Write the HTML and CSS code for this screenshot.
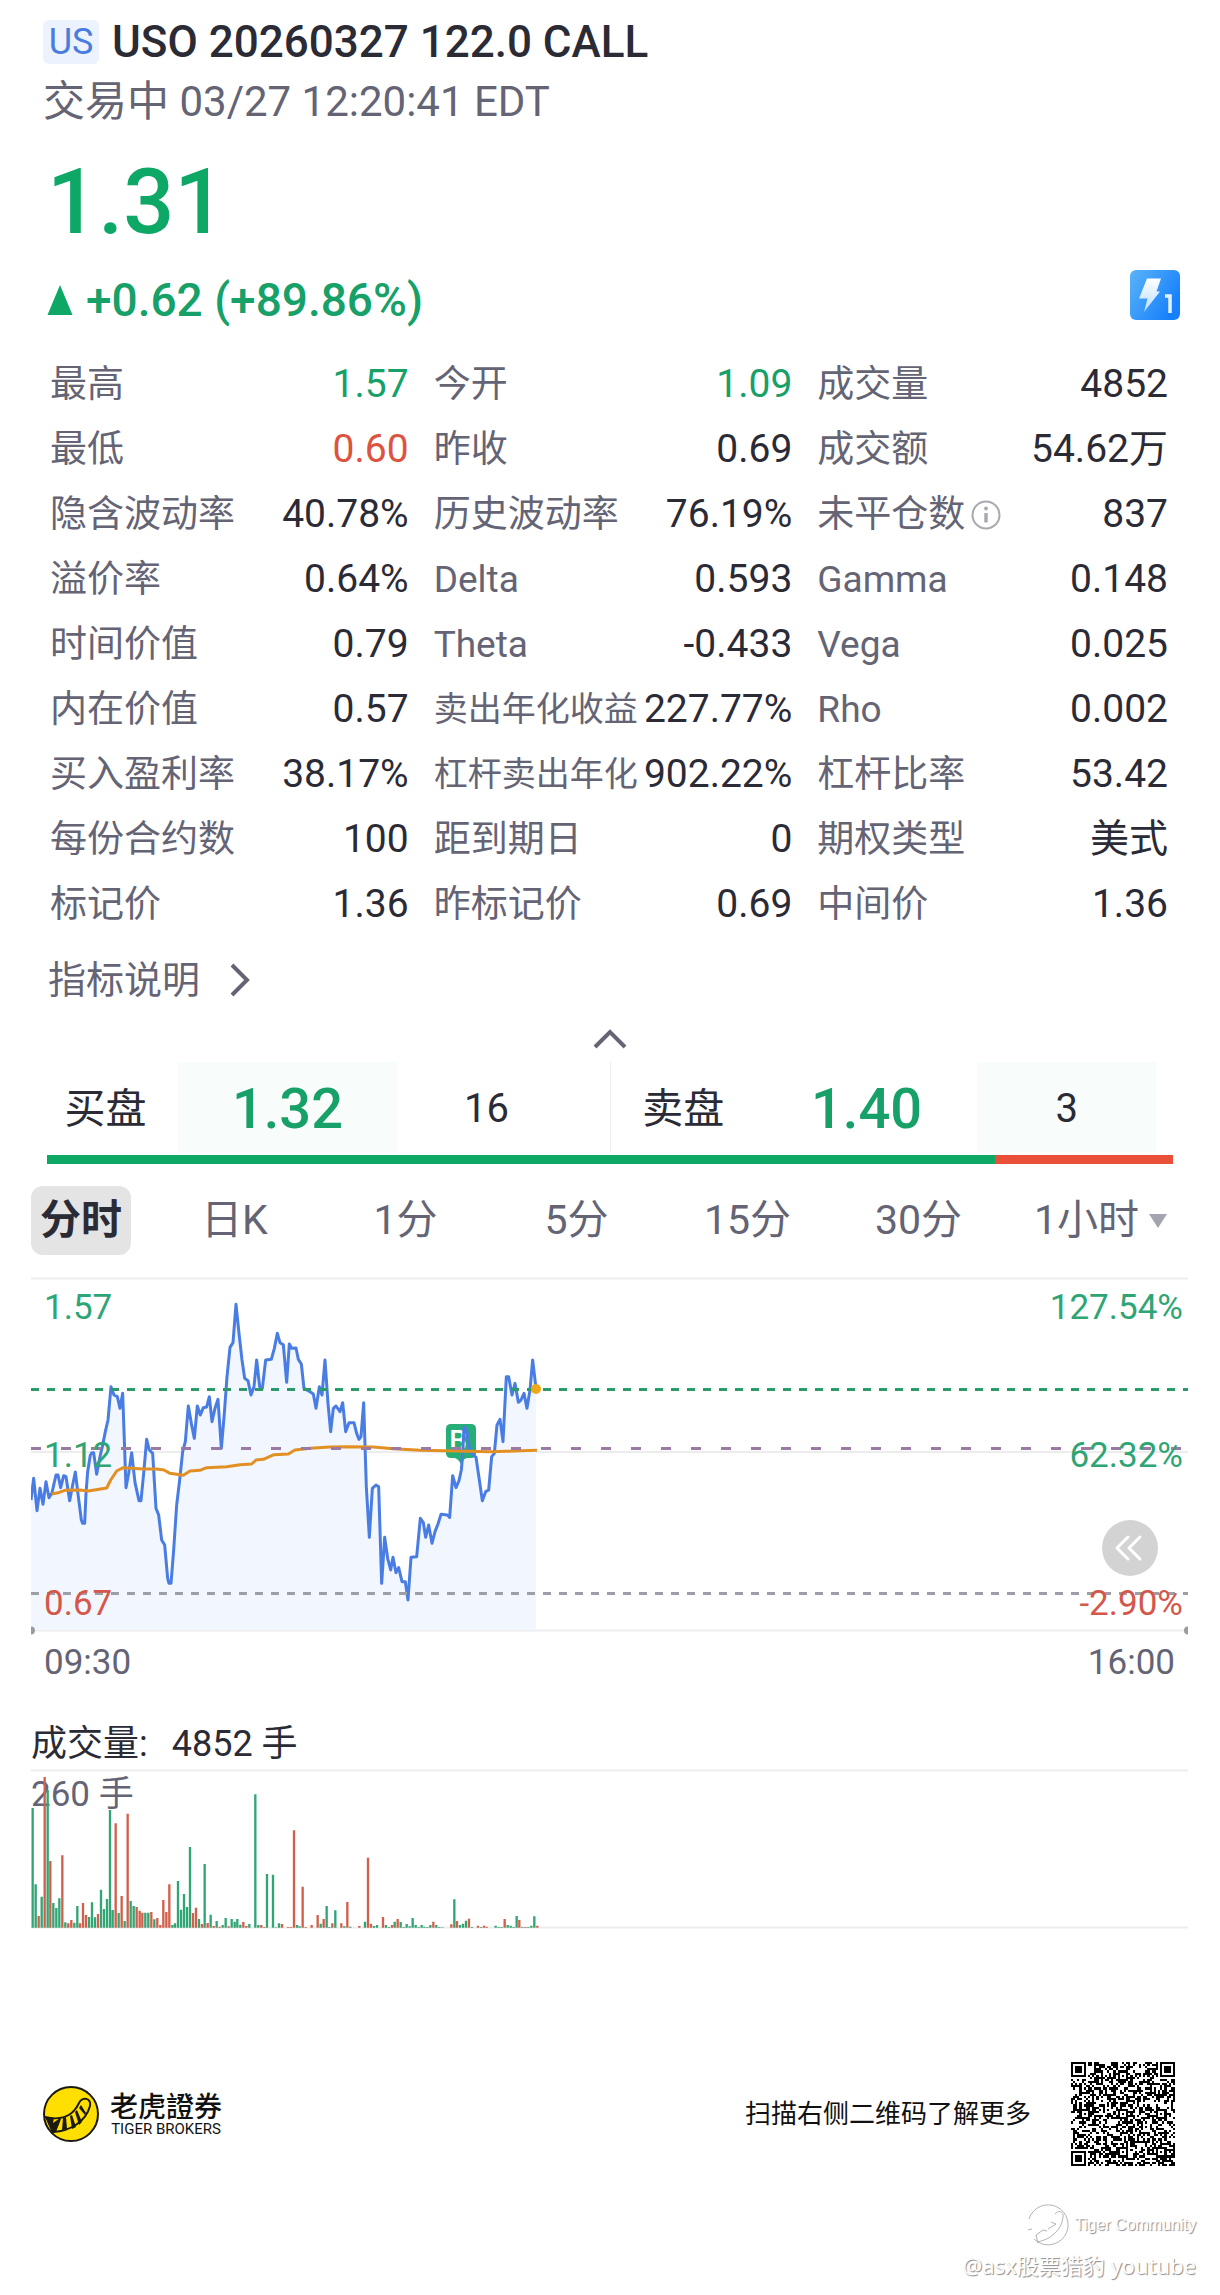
FILE: index.html
```html
<!DOCTYPE html>
<html lang="zh-CN">
<head>
<meta charset="utf-8">
<meta name="viewport" content="width=device-width, initial-scale=1">
<title>USO 20260327 122.0 CALL</title>
<link rel="stylesheet" href="styles.css">
</head>
<body>
<main class="page">
  <header class="quote">
    <h1 class="title"><span class="market">US</span>USO 20260327 122.0 CALL</h1>
    <p class="session">交易中 03/27 12:20:41 EDT</p>
    <p class="price">1.31</p>
    <div class="change-row">
      <p class="change">
        <svg class="change-arrow" viewBox="0 0 26 32" aria-hidden="true"><path d="M13 1 25.500 31H.5z"/></svg>+0.62 (+89.86%)
      </p>
      <svg class="flash" viewBox="0 0 50 50" role="img" aria-label="Level 1">
        <defs>
          <linearGradient id="flash-bg" x1="0" y1="0" x2="1" y2=".6"><stop offset="0" stop-color="#5bb4f8"/><stop offset="1" stop-color="#1680fb"/></linearGradient>
          <linearGradient id="flash-bolt" x1="0" y1="0" x2="0" y2="1"><stop offset="0" stop-color="#fff"/><stop offset="1" stop-color="#b9dcff"/></linearGradient>
        </defs>
        <rect width="50" height="50" rx="6" fill="url(#flash-bg)"/>
        <path d="M17 8.500h14l-4.500 13H30L14 42l3.500-13.500H9z" fill="url(#flash-bolt)"/>
        <path d="M35 26h5v17" fill="none" stroke="#e4f1ff" stroke-width="3.500"/>
      </svg>
    </div>
  </header>

  <dl class="stats">
    <div class="stat"><dt>最高</dt><dd class="up">1.57</dd></div>
    <div class="stat"><dt>今开</dt><dd class="up">1.09</dd></div>
    <div class="stat"><dt>成交量</dt><dd>4852</dd></div>
    <div class="stat"><dt>最低</dt><dd class="down">0.60</dd></div>
    <div class="stat"><dt>昨收</dt><dd>0.69</dd></div>
    <div class="stat"><dt>成交额</dt><dd>54.62万</dd></div>
    <div class="stat"><dt>隐含波动率</dt><dd>40.78%</dd></div>
    <div class="stat"><dt>历史波动率</dt><dd>76.19%</dd></div>
    <div class="stat"><dt>未平仓数<svg class="info" viewBox="0 0 30 30" aria-hidden="true"><circle cx="15" cy="15" r="13.500" fill="none" stroke="#a9a9b2" stroke-width="2"/><circle cx="15" cy="8.500" r="2" fill="#a9a9b2"/><path d="M15 13v9.500" stroke="#a9a9b2" stroke-width="3.500"/></svg></dt><dd>837</dd></div>
    <div class="stat"><dt>溢价率</dt><dd>0.64%</dd></div>
    <div class="stat"><dt>Delta</dt><dd>0.593</dd></div>
    <div class="stat"><dt>Gamma</dt><dd>0.148</dd></div>
    <div class="stat"><dt>时间价值</dt><dd>0.79</dd></div>
    <div class="stat"><dt>Theta</dt><dd>-0.433</dd></div>
    <div class="stat"><dt>Vega</dt><dd>0.025</dd></div>
    <div class="stat"><dt>内在价值</dt><dd>0.57</dd></div>
    <div class="stat"><dt class="tight">卖出年化收益</dt><dd>227.77%</dd></div>
    <div class="stat"><dt>Rho</dt><dd>0.002</dd></div>
    <div class="stat"><dt>买入盈利率</dt><dd>38.17%</dd></div>
    <div class="stat"><dt class="tight">杠杆卖出年化</dt><dd>902.22%</dd></div>
    <div class="stat"><dt>杠杆比率</dt><dd>53.42</dd></div>
    <div class="stat"><dt>每份合约数</dt><dd>100</dd></div>
    <div class="stat"><dt>距到期日</dt><dd>0</dd></div>
    <div class="stat"><dt>期权类型</dt><dd>美式</dd></div>
    <div class="stat"><dt>标记价</dt><dd>1.36</dd></div>
    <div class="stat"><dt>昨标记价</dt><dd>0.69</dd></div>
    <div class="stat"><dt>中间价</dt><dd>1.36</dd></div>
  </dl>

  <a class="explain" href="#indicators">指标说明
    <svg class="explain-arrow" viewBox="0 0 20 34" aria-hidden="true"><path d="M2 2l15 15L2 32"/></svg>
  </a>
  <button class="collapse" type="button" aria-label="收起">
    <svg viewBox="0 0 34 20" aria-hidden="true"><path d="M2 18 17 3l15 15"/></svg>
  </button>

  <section class="book" aria-label="买卖盘">
    <div class="side">
      <span class="side-name">买盘</span><span class="side-price tint">1.32</span><span class="side-size">16</span>
    </div>
    <div class="side ask">
      <span class="side-name">卖盘</span><span class="side-price">1.40</span><span class="side-size tint">3</span>
    </div>
  </section>
  <div class="ratio"><span style="width:84.2%"></span></div>

  <nav class="tabs" aria-label="周期">
    <button class="tab active" type="button">分时</button>
    <button class="tab" type="button">日K</button>
    <button class="tab" type="button">1分</button>
    <button class="tab" type="button">5分</button>
    <button class="tab" type="button">15分</button>
    <button class="tab" type="button">30分</button>
    <button class="tab more" type="button">1小时<svg class="caret" viewBox="0 0 18 14" aria-hidden="true"><path d="M0 0h18L9 14z"/></svg></button>
  </nav>

  <section class="charts">
    <div class="chart-box">
      <svg class="chart" viewBox="0 0 1157 360" role="img" aria-label="分时走势">
        <path class="rule" d="M0 1.500h1157M0 175h1157M0 353.500h1157"/>
        <g transform="scale(.33333) translate(-33 -21)">
          <path id="area" class="area"/>
          <rect x="1278" y="462" width="90" height="102" rx="14" fill="#26ae76"/>
          <path d="M1300 563q14 2 22 18q8-16 24-18z" fill="#26ae76"/>
        </g>
        <text class="marker" x="427" y="173" text-anchor="middle">B</text>
        <g transform="scale(.33333) translate(-33 -21)">
          <polyline id="price-line" class="price-line" points="33,690 41,625 51,722 60,655 69,703 78,635 87,683 96,668 108,615 114,615 122,653 131,617 138,620 149,692 158,645 166,606 175,680 184,750 188,760 194,760 198,670 203,605 211,555 216,548 221,548 230,613 240,560 247,530 256,485 264,450 273,350 282,375 292,380 300,415 308,370 318,653 326,610 335,548 345,638 357,692 363,692 371,610 380,508 388,540 398,550 408,715 416,735 425,810 434,825 443,925 447,940 453,940 461,840 470,705 479,630 488,545 496,515 505,408 514,460 523,505 532,408 541,435 550,413 560,411 568,380 576,455 585,415 594,388 604,535 613,430 621,320 630,232 639,218 648,103 657,190 666,270 674,325 684,332 693,375 702,350 710,270 719,350 727,355 737,270 754,268 763,235 772,190 780,218 790,224 800,337 808,222 815,235 828,234 835,268 844,282 852,355 870,365 880,372 888,415 898,350 906,375 915,270 924,400 932,485 940,415 948,408 960,425 968,398 977,485 987,458 1002,458 1010,490 1017,508 1023,500 1031,398 1039,650 1048,802 1057,655 1068,645 1076,650 1085,940 1094,802 1103,865 1112,900 1119,862 1128,908 1136,893 1146,935 1156,935 1164,990 1173,862 1190,860 1201,745 1210,758 1217,802 1226,765 1236,820 1245,785 1254,762 1263,733 1282,735 1289,742 1298,617 1308,653 1317,632 1324,600 1328,555 1332,470 1340,480 1350,545 1368,562 1378,630 1387,692 1397,665 1406,660 1415,560 1423,550 1431,465 1440,448 1449,515 1459,320 1466,320 1476,375 1485,340 1495,397 1503,390 1512,370 1521,415 1530,360 1538,270 1548,355"/>
          <polyline class="average-line" points="95,672 115,668 135,661 180,660 205,663 260,654 272,630 290,603 310,593 370,597 410,597 432,600 450,610 490,616 510,603 540,601 560,593 620,590 660,584 695,582 708,570 730,568 762,554 805,552 825,540 870,535 930,531 990,530 1060,531 1120,536 1200,541 1310,543 1410,545 1460,544 1551,541"/>
        </g>
        <path class="dash current" d="M0 112.500h1157"/>
        <path class="dash middle" d="M0 171.500h1157"/>
        <path class="dash previous" d="M0 316.500h1157"/>
        <circle cx="505" cy="112" r="5" fill="#f0a818"/>
        <path d="M0 349.500a4 4 0 0 1 0 8zM1157 349.500a4 4 0 0 0 0 8z" fill="#9b9ba3"/>
        <g class="axis">
          <text class="up" x="13" y="42">1.57</text>
          <text class="up" x="13" y="190">1.12</text>
          <text class="down" x="13" y="338">0.67</text>
          <text class="up" x="1152" y="42" text-anchor="end">127.54%</text>
          <text class="up" x="1152" y="190" text-anchor="end">62.32%</text>
          <text class="down" x="1152" y="338" text-anchor="end">-2.90%</text>
        </g>
      </svg>
      <button class="rewind" type="button" aria-label="展开">
        <svg viewBox="0 0 56 56" aria-hidden="true"><path d="M26 17 15 28l11 11M38 17 27 28l11 11"/></svg>
      </button>
    </div>
    <div class="times"><span>09:30</span><span>16:00</span></div>
    <p class="volume-title"><span>成交量:</span><span>4852 手</span></p>
    <svg class="chart" viewBox="0 0 1157 164" role="img" aria-label="成交量">
      <path class="rule" d="M0 2.500h1157M0 159.500h1157"/>
      <text class="volume-max" x="0" y="38">260 手</text>
      <g transform="scale(.33333) translate(-33 -144)">
        <path id="volume-up" class="bars-up"/>
        <path id="volume-down" class="bars-down"/>
      </g>
    </svg>
  </section>

  <footer class="brand">
    <svg class="brand-logo" viewBox="0 0 56 56" aria-hidden="true">
      <circle cx="28" cy="28" r="27" fill="#ffdf00" stroke="#1c1a10" stroke-width="2"/>
      <path d="M2 31c16 4 28-1 34-14 3-7 13-5 11 3-4 15-19 25-37 26" fill="none" stroke="#1c1a10" stroke-width="2"/>
      <path d="M2 31l9 1-1 5 7-5 1 1-5 13-4 1zM20 32l3-1 1 12-5 1zM27 30l2-1 4 12-4 2zM32 26l2-2 5 12-3 3zM36 22l2-3 5 8-1 2z" fill="#1c1a10"/>
    </svg>
    <div class="brand-name"><strong>老虎證券</strong><span>TIGER BROKERS</span></div>
    <p class="scan">扫描右侧二维码了解更多</p>
    <svg class="qr" viewBox="0 0 49 49" shape-rendering="crispEdges" role="img" aria-label="二维码"><path id="qr-modules"/></svg>
  </footer>

  <aside class="watermark">
    <p class="community">
      <svg viewBox="0 0 44 44" aria-hidden="true">
        <path d="M3 16A20 20 0 1 1 8 36M2 27l4-1M12 40l-2-8 7-5 4 1M22 26l8-5-5-2M29 11c3-4 9-3 8 3-1 13-13 23-26 25"/>
      </svg>Tiger Community
    </p>
    <p class="author">@asx股票猎豹 youtube</p>
  </aside>
</main>
<script src="script.js"></script>
</body>
</html>
```
FILE: styles.css
```css
* { box-sizing: border-box; }

body {
  margin: 0;
  background: #fff;
  color: #2b2b36;
  font-family: Roboto, "Noto Sans CJK SC", sans-serif;
}

h1, p, dl, dd { margin: 0; }

button {
  padding: 0;
  border: 0;
  background: none;
  color: inherit;
  font: inherit;
}

.up { color: #17a068; fill: #2ea574; }
.down { color: #dc5340; fill: #d4574b; }

.page {
  display: flex;
  flex-direction: column;
  padding: 12px 0;
}

/* Quote header */
.quote { padding: 0 40px 0 43px; }

.title {
  display: flex;
  align-items: center;
  gap: 13px;
  font-size: 44px;
  font-weight: 500;
  line-height: 60px;
}

.market {
  width: 56px;
  border-radius: 6px;
  background: #edf3fe;
  color: #4a7ce0;
  font-size: 36px;
  font-weight: 400;
  line-height: 44px;
  text-align: center;
}

.session {
  color: #646475;
  font-size: 42px;
  line-height: 60px;
}

.price {
  margin: 16px 0 12px 4px;
  color: #0da766;
  font-size: 90px;
  font-weight: 500;
  line-height: 110px;
}

.change-row {
  display: flex;
  justify-content: space-between;
  align-items: flex-start;
}

.change {
  display: flex;
  align-items: center;
  gap: 13px;
  margin-left: 4px;
  color: #17a068;
  font-size: 46px;
  font-weight: 500;
  line-height: 60px;
}

.change-arrow { width: 26px; height: 32px; fill: #0da766; }
.flash { width: 50px; height: 50px; }

/* Statistics */
.stats {
  display: grid;
  grid-template-columns: 359fr 359fr 351fr;
  grid-auto-rows: 65px;
  column-gap: 25px;
  margin-top: 22px;
  padding: 0 52px 0 50px;
  line-height: 65px;
}

.stat {
  display: flex;
  justify-content: space-between;
  min-width: 0;
  white-space: nowrap;
}

.stat dt {
  display: flex;
  align-items: center;
  gap: 6px;
  color: #646475;
  font-size: 37px;
}

.stat dt.tight { font-size: 34px; }
.stat dd { font-size: 39px; }
.info { width: 30px; height: 30px; }

.explain {
  display: flex;
  align-items: center;
  align-self: flex-start;
  gap: 30px;
  margin: 13px 0 0 48px;
  color: #646475;
  font-size: 38px;
  line-height: 60px;
  text-decoration: none;
}

.explain-arrow { width: 20px; height: 34px; }

.explain-arrow path,
.collapse path {
  fill: none;
  stroke: #646475;
  stroke-width: 4;
}

.collapse {
  display: flex;
  align-items: center;
  align-self: center;
  height: 40px;
  margin-top: 9px;
}

.collapse svg { width: 34px; height: 20px; }

/* Bid and ask */
.book {
  display: grid;
  grid-template-columns: 1fr 1fr;
  margin: 3px 47px 0;
}

.side {
  display: grid;
  grid-template-columns: 131fr 219fr 213fr;
  height: 90px;
  line-height: 94px;
  text-align: center;
}

.side.ask {
  grid-template-columns: 145fr 222fr 179fr;
  padding-right: 17px;
  border-left: 1px solid #f0f0f2;
}

.side > span { height: 90px; }
.side-name { font-size: 41px; }
.side:not(.ask) .side-name { padding-right: 14px; }
.side-price { color: #17a068; font-size: 56px; font-weight: 500; }
.side-size { font-size: 40px; }
.side:not(.ask) .side-size { padding-right: 34px; }
.tint { background: #f8fdfc; }

.ratio {
  height: 9px;
  margin: 3px 47px 0;
  background: #ea5038;
}

.ratio span { display: block; height: 100%; background: #0da766; }

/* Period tabs */
.tabs {
  display: grid;
  grid-template-columns: 118fr repeat(6, 171fr);
  margin: 22px 45px 22px 31px;
}

.tab {
  display: flex;
  align-items: center;
  justify-content: center;
  gap: 10px;
  height: 69px;
  color: #646475;
  font-size: 41px;
  line-height: 69px;
}

.tab.active {
  justify-self: start;
  padding: 0 9px;
  border-radius: 12px;
  background: #e4e4e4;
  color: #2b2b36;
  font-weight: 700;
}

.tab.more { justify-content: flex-end; padding-right: 8px; }

.caret { width: 18px; height: 14px; fill: #a4a4b0; }

/* Charts */
.charts { padding: 0 32px 0 31px; }
.chart { display: block; width: 100%; height: auto; }
.chart-box { position: relative; }
.rule { stroke: #ededf0; stroke-width: 2; }
.area { fill: #f2f6fe; }

.price-line,
.average-line {
  fill: none;
  stroke: #4a7de4;
  stroke-width: 9;
  stroke-linejoin: round;
}

.average-line { stroke: #e28f24; }
.dash { stroke-width: 3; }
.current { stroke: #2a9a6b; stroke-dasharray: 8; }
.middle { stroke: #9a7aa3; stroke-dasharray: 10 20; }
.previous { stroke: #9e9ea6; stroke-dasharray: 8; }
.marker { fill: #fff; font-size: 28px; font-weight: 500; }
.axis { font-size: 35px; }

.rewind {
  position: absolute;
  top: 243px;
  right: 30px;
  width: 56px;
  height: 56px;
  border-radius: 50%;
  background: #d3d3d4;
}

.rewind svg { display: block; }

.rewind path {
  fill: none;
  stroke: #fff;
  stroke-width: 3;
  stroke-linecap: round;
  stroke-linejoin: round;
}

.times {
  display: flex;
  justify-content: space-between;
  padding: 2px 13px 0;
  color: #646475;
  font-size: 35px;
  line-height: 48px;
}

.volume-title {
  display: flex;
  gap: 24px;
  margin-top: 33px;
  font-size: 36px;
  line-height: 48px;
}

.volume-max { fill: #646475; font-size: 35px; }

.bars-up,
.bars-down { stroke: #31a574; stroke-width: 7; }
.bars-down { stroke: #d25f4b; }

/* Brand footer */
.brand {
  display: flex;
  align-items: center;
  margin-top: 130px;
  padding: 0 45px 0 43px;
  color: #111;
}

.brand-logo { width: 56px; height: 56px; }

.brand-name {
  display: flex;
  flex-direction: column;
  align-items: center;
  margin-left: 11px;
}

.brand-name strong {
  font-family: "Noto Sans CJK TC", sans-serif;
  font-size: 28px;
  font-weight: 500;
  line-height: 30px;
}

.brand-name span { font-size: 15px; line-height: 18px; }
.scan { margin-left: auto; font-size: 26px; line-height: 36px; }
.qr { width: 104px; height: 104px; margin-left: 40px; }

/* Watermark */
.watermark {
  display: flex;
  flex-direction: column;
  align-items: flex-end;
  margin-top: 37px;
  padding-right: 24px;
  color: #fff;
  text-shadow: 1px 1px 1px #888;
}

.community {
  display: flex;
  align-items: center;
  gap: 5px;
  font-family: "Liberation Sans", sans-serif;
  font-size: 16px;
}

.community svg {
  width: 44px;
  height: 44px;
  fill: none;
  stroke: #b4b4b4;
  stroke-width: 1;
}

.author {
  font-family: "Noto Sans", "Noto Sans CJK SC", sans-serif;
  font-size: 22px;
  line-height: 36px;
}
```
FILE: script.js
```js
// Shade the area under the price line down to the chart floor.
const line = document.getElementById('price-line').getAttribute('points');
document.getElementById('area').setAttribute('d', `M33,1080 L${line} L1548,1080 Z`);

// Volume per minute: positive values closed up, negative values closed down.
const volume = [
  359, 130, -35, 93, -452, 413, -200, 74, 59, 88, -217, 16, -13, -23, 15, 65, -13, -74, -38, 32,
  76, 31, -41, 114, 56, 86, 353, 53, -313, 44, -95, 20, -342, 80, 65, -62, -51, -45, 45, 45,
  -47, 25, -29, -8, -83, -47, -130, 8, 13, 140, 54, 101, 62, 242, -44, -60, 26, -11, 191, -14,
  39, -5, 20, -3, 8, 29, -4, 26, 18, 26, 9, -17, -5, 11, 0, 400, 8, -8, -2, 161,
  0, 159, 1, 13, -11, 0, -2, -2, -292, 8, 4, -123, -2, 0, -8, 0, -38, 12, -26, 65,
  2, -13, 52, 0, -13, 4, -77, 3, 0, 0, -5, 0, 18, -210, -12, 5, 8, 0, -32, 8,
  2, -8, 18, -26, 17, 2, 11, 4, 29, 8, 2, 8, 3, 2, 8, -18, 8, 2, 1, 0,
  0, -10, 85, -20, 8, 12, 21, -27, 2, 0, -6, 2, -6, -3, 0, 0, 6, 2, 2, -26,
  8, 6, 2, 35, -23, 2, -2, 2, 6, 34, -6
];
const bars = sign => volume
  .map((v, i) => v * sign > 0 ? `M${Math.round(38 + i * 8.905)} 623v-${Math.abs(v)}` : '')
  .join('');
document.getElementById('volume-up').setAttribute('d', bars(1));
document.getElementById('volume-down').setAttribute('d', bars(-1));

// Code symbol: 49 modules a side, with finder and alignment squares.
const size = 49;
const squares = [[3, 3, 3], [45, 3, 3], [3, 45, 3], [24, 24, 2], [6, 24, 2], [24, 6, 2], [42, 24, 2], [24, 42, 2], [42, 42, 2]];
let seed = 20260327;
const random = () => (seed = (seed * 1103515245 + 12345) % 2147483648) / 2147483648;
let modules = '';
for (let y = 0; y < size; y++) {
  for (let x = 0; x < size; x++) {
    let dark = random() < 0.5;
    if (x === 6) dark = y % 2 === 0;
    if (y === 6) dark = x % 2 === 0;
    for (const [cx, cy, r] of squares) {
      const d = Math.max(Math.abs(x - cx), Math.abs(y - cy));
      if (d <= r) dark = d !== r - 1;
      else if (r === 3 && d === 4) dark = false;
    }
    if (dark) modules += `M${x} ${y}h1v1h-1z`;
  }
}
document.getElementById('qr-modules').setAttribute('d', modules);
```
